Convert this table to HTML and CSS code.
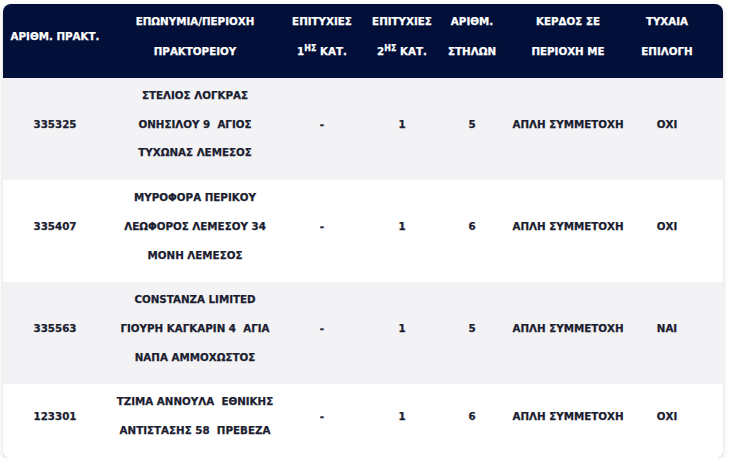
FILE: index.html
```
<!DOCTYPE html>
<html lang="el">
<head>
<meta charset="utf-8">
<title>Πρακτορεία</title>
<link rel="stylesheet" href="styles.css">
</head>
<body>
<div class="page">
  <div class="card">
    <table class="agents">
      <colgroup>
        <col class="c1"><col class="c2"><col class="c3"><col class="c4"><col class="c5"><col class="c6"><col class="c7">
      </colgroup>
      <thead>
        <tr>
          <th>ΑΡΙΘΜ. ΠΡΑΚΤ.</th>
          <th>ΕΠΩΝΥΜΙΑ/ΠΕΡΙΟΧΗ<br>ΠΡΑΚΤΟΡΕΙΟΥ</th>
          <th>ΕΠΙΤΥΧΙΕΣ<br>1<sup>ΗΣ</sup> ΚΑΤ.</th>
          <th>ΕΠΙΤΥΧΙΕΣ<br>2<sup>ΗΣ</sup> ΚΑΤ.</th>
          <th>ΑΡΙΘΜ.<br>ΣΤΗΛΩΝ</th>
          <th>ΚΕΡΔΟΣ ΣΕ<br>ΠΕΡΙΟΧΗ ΜΕ</th>
          <th class="last">ΤΥΧΑΙΑ<br>ΕΠΙΛΟΓΗ</th>
        </tr>
      </thead>
      <tbody>
        <tr class="alt">
          <td>335325</td>
          <td>ΣΤΕΛΙΟΣ ΛΟΓΚΡΑΣ<br>ΟΝΗΣΙΛΟΥ 9&nbsp; ΑΓΙΟΣ<br>ΤΥΧΩΝΑΣ ΛΕΜΕΣΟΣ</td>
          <td>-</td>
          <td>1</td>
          <td>5</td>
          <td>ΑΠΛΗ ΣΥΜΜΕΤΟΧΗ</td>
          <td class="last">ΟΧΙ</td>
        </tr>
        <tr>
          <td>335407</td>
          <td>ΜΥΡΟΦΟΡΑ ΠΕΡΙΚΟΥ<br>ΛΕΩΦΟΡΟΣ ΛΕΜΕΣΟΥ 34<br>ΜΟΝΗ ΛΕΜΕΣΟΣ</td>
          <td>-</td>
          <td>1</td>
          <td>6</td>
          <td>ΑΠΛΗ ΣΥΜΜΕΤΟΧΗ</td>
          <td class="last">ΟΧΙ</td>
        </tr>
        <tr class="alt">
          <td>335563</td>
          <td>CONSTANZA LIMITED<br>ΓΙΟΥΡΗ ΚΑΓΚΑΡΙΝ 4&nbsp; ΑΓΙΑ<br>ΝΑΠΑ ΑΜΜΟΧΩΣΤΟΣ</td>
          <td>-</td>
          <td>1</td>
          <td>5</td>
          <td>ΑΠΛΗ ΣΥΜΜΕΤΟΧΗ</td>
          <td class="last">ΝΑΙ</td>
        </tr>
        <tr>
          <td>123301</td>
          <td>ΤΖΙΜΑ ΑΝΝΟΥΛΑ&nbsp; ΕΘΝΙΚΗΣ<br>ΑΝΤΙΣΤΑΣΗΣ 58&nbsp; ΠΡΕΒΕΖΑ</td>
          <td>-</td>
          <td>1</td>
          <td>6</td>
          <td>ΑΠΛΗ ΣΥΜΜΕΤΟΧΗ</td>
          <td class="last">ΟΧΙ</td>
        </tr>
      </tbody>
    </table>
  </div>
</div>
</body>
</html>
```
FILE: styles.css
```
html, body {
  margin: 0;
  padding: 0;
  background: #ffffff;
}

.page {
  padding: 4px 7px 0 3px;
}

.card {
  width: 720px;
  border-radius: 8px;
  overflow: hidden;
  background: #ffffff;
  box-shadow: 0 2px 5px rgba(0, 0, 0, 0.16);
}

.agents {
  width: 720px;
  border-collapse: collapse;
  table-layout: fixed;
  font-family: "DejaVu Sans", Verdana, sans-serif;
  font-weight: bold;
  font-size: 10.3px;
  color: #1b2030;
  -webkit-text-stroke: 0.25px currentColor;
}

.c1 { width: 104px; }
.c2 { width: 176px; }
.c3 { width: 78px; }
.c4 { width: 82px; }
.c5 { width: 58px; }
.c6 { width: 134px; }
.c7 { width: 88px; }

.agents th {
  background: #020f38;
  color: #ffffff;
  font-weight: bold;
  text-align: center;
  vertical-align: middle;
  line-height: 30px;
  padding: 2px 0 12px;
  white-space: nowrap;
}

.agents th sup {
  font-size: 8px;
  line-height: 0;
  vertical-align: 4px;
}

.agents td {
  text-align: center;
  vertical-align: middle;
  line-height: 28.7px;
  padding: 3px 0 13px;
  white-space: nowrap;
}

.agents .last {
  padding-right: 24px;
}

.agents tbody tr {
  background: #ffffff;
}

.agents tbody tr.alt {
  background: #f3f3f5;
}
```
